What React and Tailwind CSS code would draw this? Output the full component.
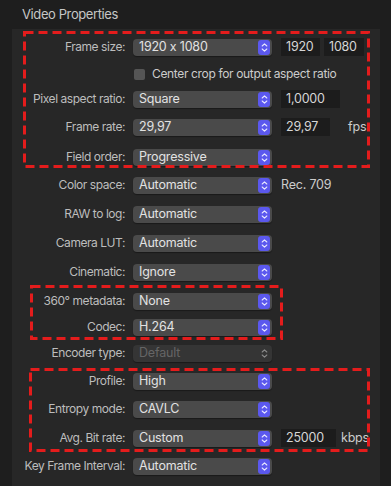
import React from "react";

function Stepper({ disabled }) {
  return (
    <div
      className={
        "absolute right-[2px] top-[1px] w-[12px] h-[15px] rounded-[3px] flex items-center justify-center " +
        (disabled ? "" : "bg-[#5b58ee]")
      }
    >
      <svg width="7" height="11" viewBox="0 0 7 11" fill="none">
        <path d="M1.2 4 L3.5 1.8 L5.8 4" stroke={disabled ? "#8a8a8a" : "#e8e8ff"} strokeWidth="1.1" strokeLinecap="round" strokeLinejoin="round" />
        <path d="M1.2 7 L3.5 9.2 L5.8 7" stroke={disabled ? "#8a8a8a" : "#e8e8ff"} strokeWidth="1.1" strokeLinecap="round" strokeLinejoin="round" />
      </svg>
    </div>
  );
}

function Popup({ value, disabled }) {
  return (
    <div
      className={
        "relative w-[139px] h-[17px] rounded-[4px] flex items-center pl-[6px] text-[12.5px] tracking-[-0.2px] leading-none shadow-[0_1px_1px_rgba(0,0,0,0.35)] " +
        (disabled ? "bg-[#353535] text-[#656565]" : "bg-[#4a4a4a] text-[#e2e2e2]")
      }
    >
      <span>{value}</span>
      <Stepper disabled={disabled} />
    </div>
  );
}

function Field({ value, w }) {
  return (
    <div className={"h-[18px] bg-[#1c1c1c] flex items-center pl-[5px] text-[12.5px] tracking-[-0.2px] text-[#d6d6d6] leading-none " + w}>
      {value}
    </div>
  );
}

function Row({ label, value, disabled, mt, children }) {
  return (
    <div className={"flex items-center h-[20px] " + (mt || "")}>
      <div className="w-[113px] text-right text-[12px] tracking-[-0.45px] text-[#bdbdbd] leading-none whitespace-nowrap">{label}</div>
      <div className="ml-[8px]">
        <Popup value={value} disabled={disabled} />
      </div>
      {children ? <div className="ml-[9px] flex items-center gap-[4px]">{children}</div> : null}
    </div>
  );
}

function DashBox({ className }) {
  return (
    <svg className={"absolute pointer-events-none overflow-visible " + className}>
      <rect x="1.5" y="1.5" width="calc(100% - 3px)" height="calc(100% - 3px)" fill="none" stroke="#e41c1c" strokeWidth="3" strokeDasharray="9 5" />
    </svg>
  );
}

export default function App() {
  return (
    <div className="w-[391px] h-[486px] overflow-hidden bg-[#1e1e1e] font-['Inter','Noto_Sans',sans-serif] [font-feature-settings:'calt'_0]">
      <div className="h-[29px] flex items-center pl-[22px] text-[13px] tracking-[-0.4px] text-[#c6c6c6]">Video Properties</div>
      <div className="relative ml-[12px] w-[368px] h-[470px] bg-[#272727] pt-[8px]">
        <Row label="Frame size:" value="1920 x 1080">
          <Field value="1920" w="w-[39px]" />
          <Field value="1080" w="w-[40px]" />
        </Row>
        <div className="flex items-center h-[20px] mt-[7px] pl-[122px]">
          <div className="w-[11px] h-[11px] rounded-[2px] bg-[#555555]" />
          <span className="ml-[7px] text-[12px] tracking-[-0.35px] text-[#cccccc] leading-none">Center crop for output aspect ratio</span>
        </div>
        <Row label="Pixel aspect ratio:" value="Square" mt="mt-[5px]">
          <Field value="1,0000" w="w-[59px]" />
        </Row>
        <Row label="Frame rate:" value="29,97" mt="mt-[8px]">
          <Field value="29,97" w="w-[49px]" />
          <span className="ml-[14px] text-[12.5px] tracking-[-0.2px] text-[#cccccc]">fps</span>
        </Row>
        <Row label="Field order:" value="Progressive" mt="mt-[10px]" />
        <Row label="Color space:" value="Automatic" mt="mt-[8px]">
          <span className="text-[12.5px] tracking-[-0.2px] text-[#cccccc]">Rec. 709</span>
        </Row>
        <Row label="RAW to log:" value="Automatic" mt="mt-[9px]" />
        <Row label="Camera LUT:" value="Automatic" mt="mt-[9px]" />
        <Row label="Cinematic:" value="Ignore" mt="mt-[9px]" />
        <Row label="360° metadata:" value="None" mt="mt-[9px]" />
        <Row label="Codec:" value="H.264" mt="mt-[6px]" />
        <Row label="Encoder type:" value="Default" disabled mt="mt-[6px]" />
        <Row label="Profile:" value="High" mt="mt-[8px]" />
        <Row label="Entropy mode:" value="CAVLC" mt="mt-[8px]" />
        <Row label="Avg. Bit rate:" value="Custom" mt="mt-[9px]">
          <Field value="25000" w="w-[55px]" />
          <span className="ml-[1px] text-[12.5px] tracking-[-0.2px] text-[#cccccc]">kbps</span>
        </Row>
        <Row label="Key Frame Interval:" value="Automatic" mt="mt-[8px]" />
        <Row label="Audio format:" value="AAC" mt="mt-[8px]" />

        <DashBox className="left-[11px] top-[2px] w-[347px] h-[137px]" />
        <DashBox className="left-[18px] top-[256px] w-[253px] h-[55px]" />
        <DashBox className="left-[17px] top-[339px] w-[341px] h-[84px]" />
      </div>
    </div>
  );
}
